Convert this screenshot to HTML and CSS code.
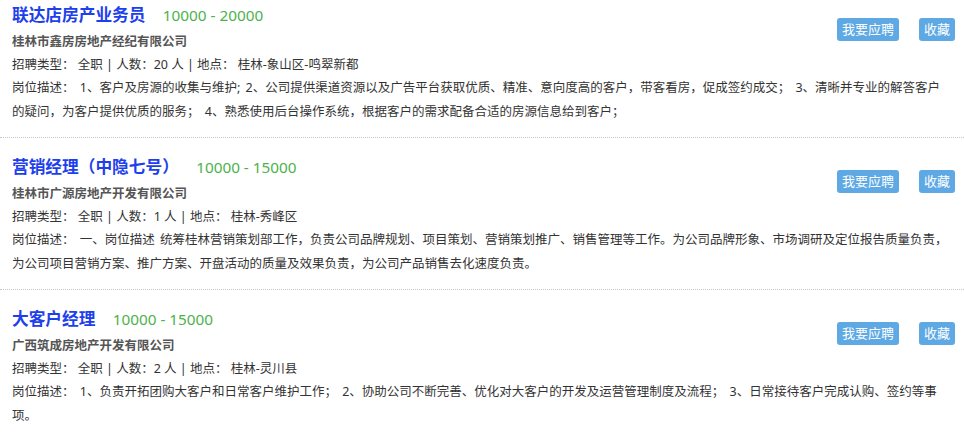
FILE: index.html
```html
<!DOCTYPE html>
<html lang="zh-CN">
<head>
  <meta charset="UTF-8">
  <meta name="viewport" content="width=device-width, initial-scale=1.0">
  <title>招聘职位</title>
  <link rel="stylesheet" href="styles.css">
</head>
<body>
  <div class="job-list">
    <div class="job">
      <div class="job-head">
        <a class="job-title" href="#">联达店房产业务员</a>
        <span class="salary">10000 - 20000</span>
      </div>
      <div class="company">桂林市鑫房房地产经纪有限公司</div>
      <div class="actions">
        <button class="btn">我要应聘</button>
        <button class="btn">收藏</button>
      </div>
      <div class="info">招聘类型： 全职 | 人数：20 人 | 地点： 桂林-象山区-鸣翠新都</div>
      <div class="desc">岗位描述： 1、客户及房源的收集与维护; 2、公司提供渠道资源以及广告平台获取优质、精准、意向度高的客户，带客看房，促成签约成交； 3、清晰并专业的解答客户的疑问，为客户提供优质的服务； 4、熟悉使用后台操作系统，根据客户的需求配备合适的房源信息给到客户；</div>
    </div>

    <div class="job">
      <div class="job-head">
        <a class="job-title" href="#">营销经理（中隐七号）</a>
        <span class="salary">10000 - 15000</span>
      </div>
      <div class="company">桂林市广源房地产开发有限公司</div>
      <div class="actions">
        <button class="btn">我要应聘</button>
        <button class="btn">收藏</button>
      </div>
      <div class="info">招聘类型： 全职 | 人数：1 人 | 地点： 桂林-秀峰区</div>
      <div class="desc">岗位描述： 一、岗位描述 统筹桂林营销策划部工作，负责公司品牌规划、项目策划、营销策划推广、销售管理等工作。为公司品牌形象、市场调研及定位报告质量负责，为公司项目营销方案、推广方案、开盘活动的质量及效果负责，为公司产品销售去化速度负责。</div>
    </div>

    <div class="job">
      <div class="job-head">
        <a class="job-title" href="#">大客户经理</a>
        <span class="salary">10000 - 15000</span>
      </div>
      <div class="company">广西筑成房地产开发有限公司</div>
      <div class="actions">
        <button class="btn">我要应聘</button>
        <button class="btn">收藏</button>
      </div>
      <div class="info">招聘类型： 全职 | 人数：2 人 | 地点： 桂林-灵川县</div>
      <div class="desc">岗位描述： 1、负责开拓团购大客户和日常客户维护工作； 2、协助公司不断完善、优化对大客户的开发及运营管理制度及流程； 3、日常接待客户完成认购、签约等事项。</div>
    </div>
  </div>
</body>
</html>
```

FILE: styles.css
```css
body {
  margin: 0;
  background-color: #fff;
  font-family: "Noto Sans", "Noto Sans CJK SC", sans-serif;
  font-size: 12.5px;
  color: #333;
}
.job-list {
  padding: 0;
}
.job {
  display: grid;
  grid-template-columns: 1fr auto;
  padding: 16px 9px 13px 12px;
  border-bottom: 1px dotted #c8c8c8;
}
.job:first-child {
  padding-top: 2px;
}
.job-head {
  grid-column: 1;
  grid-row: 1;
  line-height: 26px;
  white-space: nowrap;
}
.job-title {
  font-size: 16.7px;
  font-weight: bold;
  color: #1d40ec;
  text-decoration: none;
}
.salary {
  margin-left: 14px;
  font-size: 15.3px;
  color: #4cb24c;
}
.company {
  grid-column: 1;
  grid-row: 2;
  line-height: 23px;
  font-weight: bold;
  color: #555;
}
.actions {
  grid-column: 2;
  grid-row: 1 / span 2;
  align-self: start;
  margin-top: 16px;
  display: flex;
  gap: 20px;
}
.btn {
  background-color: #5ea9e4;
  color: #fff;
  border: none;
  border-radius: 3px;
  padding: 2px 5px;
  font-family: inherit;
  font-size: 13px;
  line-height: 19px;
  cursor: pointer;
}
.btn:hover {
  background-color: #3d8fd1;
}
.info {
  grid-column: 1 / span 2;
  line-height: 23px;
}
.desc {
  grid-column: 1 / span 2;
  line-height: 24px;
  padding-right: 4px;
  word-spacing: 2px;
}
```
